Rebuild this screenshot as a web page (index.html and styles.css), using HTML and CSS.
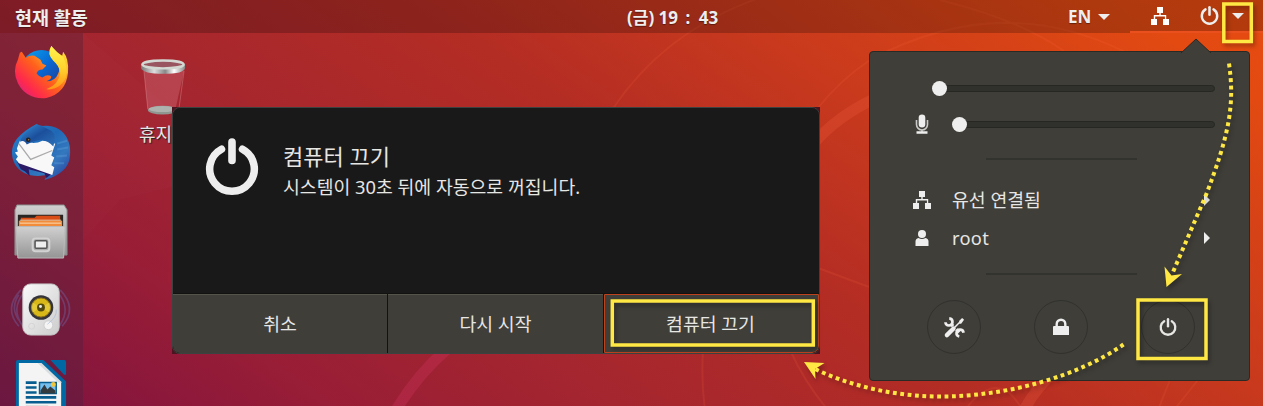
FILE: index.html
```html
<!DOCTYPE html>
<html lang="ko">
<head>
<meta charset="utf-8">
<title>컴퓨터 끄기</title>
<link rel="stylesheet" href="styles.css">
</head>
<body>
<svg width="0" height="0" class="defs">
  <defs>
    <symbol id="network" viewBox="0 0 20 20"><path d="M7 1h6v6h-2.300v2h5.500v4H19v6h-6v-6h1.900v-2.600H5.200V13H7v6H1v-6h2.800V9h5.500V7H7z"/></symbol>
    <symbol id="power" viewBox="0 0 18 18"><path d="M5.200 3.200a7.300 7.300 0 1 0 7.600 0" fill="none" stroke="currentColor" stroke-width="2.300" stroke-linecap="round"/><path d="M9 1.200v7" fill="none" stroke="currentColor" stroke-width="2.400" stroke-linecap="round"/></symbol>
    <linearGradient id="metal" x1="0" y1="0" x2="0" y2="1"><stop offset="0" stop-color="#d0d0d0"/><stop offset="1" stop-color="#959595"/></linearGradient>
    <linearGradient id="foxbody" x1="0" y1="1" x2="1" y2="0"><stop offset="0" stop-color="#c81f94"/><stop offset=".25" stop-color="#ff2a4c"/><stop offset=".5" stop-color="#ff611b"/><stop offset=".8" stop-color="#ffc42a"/><stop offset="1" stop-color="#fff044"/></linearGradient>
    <linearGradient id="foxtail" x1="0" y1="0" x2="0" y2="1"><stop offset="0" stop-color="#fff44f"/><stop offset=".5" stop-color="#ffd52e"/><stop offset="1" stop-color="#ff9518"/></linearGradient>
    <linearGradient id="globe" x1="0" y1="0" x2="1" y2="1"><stop offset="0" stop-color="#0aa6ef"/><stop offset=".5" stop-color="#0867d2"/><stop offset="1" stop-color="#293384"/></linearGradient>
    <linearGradient id="bird" x1="0" y1="0" x2="1" y2="1"><stop offset="0" stop-color="#2782cf"/><stop offset=".45" stop-color="#1f68b5"/><stop offset=".7" stop-color="#3478be"/><stop offset="1" stop-color="#27389b"/></linearGradient>
    <linearGradient id="head" x1="0" y1="0" x2="1" y2="1"><stop offset="0" stop-color="#3a93d8"/><stop offset=".5" stop-color="#1b4f9c"/><stop offset="1" stop-color="#2c70b8"/></linearGradient>
    <linearGradient id="rim" x1="0" y1="0" x2="1" y2="0"><stop offset="0" stop-color="#777"/><stop offset=".3" stop-color="#ddd"/><stop offset=".55" stop-color="#888"/><stop offset=".75" stop-color="#fff"/><stop offset="1" stop-color="#888"/></linearGradient>
    <linearGradient id="shell" x1="0" y1="0" x2="1" y2="1"><stop offset="0" stop-color="#fafafa"/><stop offset="1" stop-color="#ccc"/></linearGradient>
  </defs>
</svg>

<svg class="wallpaper" viewBox="0 0 1263 406" fill="none">
  <path d="M83 33L240 170L120 200L83 240z" fill="#fff" fill-opacity=".012"/>
  <path d="M446 350Q418 374 396 410" stroke="#d43465" stroke-opacity=".3" stroke-width="11"/>
  <path d="M612 110Q665 30 762 -3M818 108Q840 80 870 60Q1000 -10 1125 52M940 0Q1020 20 1064 51M703 350Q701 380 705 410M790 350Q805 383 828 410M818 268Q850 280 872 288" stroke="#ff6c42" stroke-opacity=".14" stroke-width="2"/>
  <path d="M815 142Q838 116 874 99M1050 376Q1035 390 1024 410" stroke="#ff6848" stroke-opacity=".2" stroke-width="11"/>
  <path d="M968 406Q998 370 1020 406M1170 380L1158 410M1198 380L1174 410" stroke="#ff6c42" stroke-opacity=".14" stroke-width="2"/>
</svg>

<header class="panel">
  <div class="activities">현재 활동</div>
  <div class="clock">(금) 19 <span class="colon">:</span> 43</div>
  <div class="input-source">EN<i class="caret"></i></div>
  <div class="status">
    <svg class="status-network"><use href="#network"/></svg>
    <svg class="status-power"><use href="#power"/></svg>
    <i class="caret"></i>
  </div>
</header>

<main class="workspace">
  <nav class="dock">
    <svg class="app" viewBox="0 0 60 60">
      <circle cx="31" cy="28" r="21" fill="url(#globe)"/>
      <path d="M11 9L15 15Q19 12 24 13L30 17L32 21L36 23L32 27Q27 27 26 31Q28 34 32 35Q37 31 41 34Q41 37 36 39Q45 39 48 31Q51 25 45 19Q37 10 41 3Q45 10 52 13L53 9Q59 16 58 30Q56 51 36 56Q16 58 7 41Q1 28 7 17L9 10z" fill="url(#foxbody)"/>
      <path d="M41 3Q47 10 53 14Q62 33 50 43Q44 48 36 47Q49 42 50 30Q49 23 43 18Q36 11 41 3z" fill="url(#foxtail)"/>
    </svg>
    <svg class="app" viewBox="0 0 60 60">
      <path d="M26 2Q27 4 33 4C51 2 62 17 60 34Q59 52 34 59L37 54Q13 58 4 43Q-3 29 6 17Q14 8 26 2z" fill="url(#bird)"/>
      <path d="M6 40L10 48L14 50L19 55L18 48L34 52L36 57L42 52L40 46z" fill="#2b1a66"/>
      <path d="M9 19L6 27L7 30L4 31L7 35L5 38L8 42L42 54L44 46L41 44L44 36L41 34L45 22Q38 19 32 19Q22 24 12 18z" fill="#f8f8f8"/>
      <path d="M8 22L20 38L42 29" fill="none" stroke="#aaa" stroke-width="1.300"/>
      <path d="M26 2Q22 6 16 10Q11 14 9 20Q14 18 16 23Q22 19 31 18Q38 19 43 25Q47 14 41 9Q34 5 26 2z" fill="url(#head)"/>
      <path d="M47 22L57 19M47 28L58 26M46 35L57 34M44 42L54 42" fill="none" stroke="#65a7df" stroke-opacity=".35" stroke-width="2"/>
      <circle cx="17.500" cy="18" r="2.300" fill="#222"/><circle cx="18" cy="18" r=".7" fill="#b58b50"/>
    </svg>
    <svg class="app" viewBox="0 0 60 60">
      <path d="M6 4H54L57 9V55H4V9z" fill="url(#metal)" stroke="#888"/>
      <path d="M7 14H53V26H7z" fill="#282625"/><path d="M10 17H24L26 15H50V20H10z" fill="#d94e16"/>
      <path d="M8 20H52V26H8z" fill="#f28c3d"/><path d="M9 19.500H51M9 22.500H51" stroke="#fff0cd" stroke-opacity=".8"/>
      <path d="M5 26H55L53.500 58H7z" fill="url(#metal)" stroke="#bbb"/>
      <rect x="22" y="38" width="17" height="13" rx="3" fill="#aaa" stroke="#d2d2d2" stroke-width="2"/>
      <rect x="24.500" y="40.500" width="12" height="7.500" rx="1" fill="#eee" stroke="#555" stroke-width="1.500"/>
    </svg>
    <svg class="app" viewBox="0 0 60 60">
      <path d="M10 10Q-8 29 8 47M14 12Q-1 29 12 47M50 10Q68 29 52 47M47 12Q62 29 49 47M8 15Q-1 28 8 41" fill="none" stroke="#6c75bd" stroke-opacity=".35" stroke-width="1.700"/>
      <rect x="12" y="4" width="37" height="52" rx="8" fill="url(#shell)" stroke="#c5c5c5"/>
      <circle cx="30.500" cy="28" r="12.500" fill="#34343a"/><circle cx="30.500" cy="28" r="9.700" fill="#d8b818" stroke="#8b7213"/>
      <path d="M30.500 28L22 23A10 10 0 0 0 22 33zM30.500 28L39 23A10 10 0 0 1 39 33z" fill="#fff180" opacity=".3"/>
      <circle cx="30.500" cy="28" r="4" fill="#504711"/><circle cx="30" cy="27" r="1.500" fill="#eee"/>
      <circle cx="38" cy="46" r="4.500" fill="#f4f4f4" stroke="#ccc"/><circle cx="21" cy="47" r="3" fill="none" stroke="#d4d4d4"/>
      <path d="M46 30Q47 38 37 45" stroke="#9eb4da" fill="none" stroke-opacity=".6"/>
    </svg>
    <svg class="app" viewBox="0 0 60 60">
      <path d="M7 1H33L56 23V60H5V3Q5 1 7 1z" fill="#0068a3"/>
      <path d="M8 4H29L51 24V60H8z" fill="#f4f4f4"/><path d="M31 4L52 24H48L27 4z" fill="#d9dddf"/>
      <path d="M40 1H54Q56 1 56 3V16H54z" fill="#0068a3"/>
      <path d="M15 24H26M15 29H26M15 34H26M15 39H46M15 44H46" stroke="#075d8f" stroke-width="2.600"/><path d="M15 48.500H38" stroke="#aaa" stroke-width="2"/>
      <path d="M29 24H46V35H29z" fill="#72bff0" stroke="#075d8f" stroke-width="1.500"/><circle cx="43" cy="26" r="2.500" fill="#f2c63b"/><path d="M30 35V32L34 26L37 31L40 28L45 32V35z" fill="#343b3e"/>
    </svg>
  </nav>
  <section class="desktop">
    <div class="trash">
      <svg class="trash-icon" viewBox="0 0 50 60">
        <path d="M5 13L9 53Q23 60 37 53L46 13z" fill="#c8606c" fill-opacity=".5"/>
        <path d="M5 13L9 52M46 13L41 50" stroke="#ebb7bb" stroke-opacity=".3" fill="none"/>
        <ellipse cx="24" cy="53" rx="15" ry="4.500" fill="#8f958f"/><ellipse cx="24" cy="52" rx="14" ry="3" fill="#aeb2ae"/>
        <path d="M2 6V10Q4 16 25 16T47 10V6z" fill="url(#rim)"/>
        <ellipse cx="24.500" cy="6.500" rx="21" ry="4" fill="#9a5660" stroke="#d3d8d3" stroke-width="2.500"/>
      </svg>
      <div class="trash-label">휴지통</div>
    </div>
  </section>
</main>

<div class="dialog-frame">
  <div class="dialog">
    <div class="dialog-body">
      <svg class="dialog-power" viewBox="0 0 54 58"><path d="M16.500 12.200A22.300 22.300 0 1 0 37.500 12.200" fill="none" stroke="#eee" stroke-width="7.500" stroke-linecap="round"/><path d="M27 5V23.500" stroke="#eee" stroke-width="7.600" stroke-linecap="round"/></svg>
      <div>
        <div class="dialog-title">컴퓨터 끄기</div>
        <div class="dialog-message">시스템이 30초 뒤에 자동으로 꺼집니다.</div>
      </div>
    </div>
    <div class="dialog-actions">
      <div class="action">취소</div>
      <div class="action">다시 시작</div>
      <div class="action focused">컴퓨터 끄기</div>
    </div>
  </div>
</div>

<aside class="menu">
  <svg class="menu-arrow" viewBox="0 0 30 15"><path d="M0 15L15 1L30 15" fill="#3f3e39" stroke="#292925"/></svg>
  <div class="slider-row"><span class="menu-icon"></span><div class="slider output"><i class="knob"></i></div></div>
  <div class="slider-row"><span class="menu-icon"><svg class="mic" viewBox="0 0 14 20"><rect x="3.700" y=".5" width="6.600" height="13" rx="3.300" fill="#eee"/><path d="M1.500 6v4.500a5.500 5.500 0 0 0 11 0V6M7 16v3" fill="none" stroke="#c9c9c7" stroke-width="1.600"/><path d="M1.500 18.500h11" stroke="#eee" stroke-width="2.500"/></svg></span><div class="slider input"><i class="knob"></i></div></div>
  <div class="rule"></div>
  <div class="menu-row"><span class="menu-icon"><svg class="net"><use href="#network"/></svg></span><span class="menu-label">유선 연결됨</span><i class="arrow"></i></div>
  <div class="menu-row"><span class="menu-icon"><svg class="user" viewBox="0 0 14 18"><circle cx="7" cy="5" r="4" fill="#eee"/><path d="M.5 17v-4.500q0-3 3-3.500q3.500 2 7 0q3 .5 3 3.500V17z" fill="#eee"/></svg></span><span class="menu-label root">root</span><i class="arrow"></i></div>
  <div class="rule"></div>
  <div class="buttons">
    <div class="round"><svg class="tools" viewBox="0 0 22 22"><path d="M3 19L10 12" stroke="#eee" stroke-width="4.500" stroke-linecap="round"/><path d="M10 12L18 4" stroke="#eee" stroke-width="1.600"/><path d="M16 4l3-3 2 2-3 4-2 0z" fill="#eee"/><path d="M7 7L9.500 9.500M13 13L16 16" stroke="#eee" stroke-width="3.500"/><path d="M5.500 1.500A3.700 3.700 0 1 1 1.500 5.500M20.500 16.500A3.700 3.700 0 1 0 16 20.500" fill="none" stroke="#eee" stroke-width="2.800"/></svg></div>
    <div class="round"><svg class="lock" viewBox="0 0 16 18"><path d="M3.700 9V6a4.300 4.300 0 0 1 8.600 0v3" fill="none" stroke="#eee" stroke-width="2.400"/><path d="M1 8h14q1 0 1 1v8H0V9q0-1 1-1z" fill="#eee"/></svg></div>
    <div class="round"><svg class="shutdown"><use href="#power"/></svg></div>
  </div>
</aside>

<svg class="annotations" viewBox="0 0 1263 406">
  <g fill="none" stroke="#ffe843" stroke-width="3.500">
    <rect x="1223.800" y="4" width="27.500" height="37.500"/>
    <rect x="1138" y="300" width="68" height="58.500"/>
    <rect x="612.300" y="301" width="201" height="44"/>
    <path d="M1229 63.500C1235 105 1229 135 1206 195L1173 272" stroke-width="4" stroke-dasharray="3.800 3.600"/>
    <path d="M1123.500 344.500C1080 375 1010 396.500 940 396.500C895 396.500 850 386 814 368.500" stroke-width="4" stroke-dasharray="3.800 3.600"/>
  </g>
  <path d="M1166.500 287L1164.500 266.500L1171.500 275.500L1182 274zM804 362L824.500 363L815 369L815.500 379z" fill="#ffe843"/>
</svg>
</body>
</html>
```
FILE: styles.css
```css
* { box-sizing: border-box; }
body {
  margin: 0;
  width: 1263px;
  height: 406px;
  overflow: hidden;
  position: relative;
  color: #e6e6e4;
  font: 18.3px/24px "Noto Sans", "Noto Sans CJK KR", sans-serif;
  background: linear-gradient(35.5deg, #80123f 0%, #87163d 6%, #981d36 18%, #a5262f 34%, #b42d24 54%, #c8391d 70%, #e24a12 92%, #e84c10 100%);
}
svg { display: block; flex: none; overflow: visible; }
.defs { position: absolute; }
.wallpaper, .annotations { position: absolute; inset: 0; width: 1263px; height: 406px; }
.panel {
  position: relative;
  height: 33px;
  display: grid;
  grid-template-columns: 612px 441px 62px 133px;
  align-items: center;
  padding-left: 15px;
  color: #eee;
  font-weight: 700;
  background: rgba(0, 0, 0, .22);
  text-shadow: 0 1px 1px rgba(0, 0, 0, .4);
}
.activities, .clock { padding-top: 2px; }
.activities { font-size: 18.5px; }
.clock { font-size: 17px; }
.colon { padding: 0 4px 0 3px; }
.input-source { font-size: 17px; display: flex; align-items: center; gap: 7px; }
.caret { border: 6px solid transparent; border-top-color: #eee; border-bottom: 0; }
.status { display: flex; height: 33px; align-items: center; padding-left: 20px; border-bottom: 2px solid #e9501e; }
.status-network { width: 20px; height: 20px; fill: #fff; }
.status-power { width: 19px; height: 19px; margin: 0 13px 0 30px; }
.workspace { position: relative; display: flex; height: 373px; }
.dock {
  width: 83px;
  display: flex;
  flex-direction: column;
  align-items: center;
  gap: 20px;
  padding: 10px 2px 0 0;
  background: rgba(60, 35, 65, .3);
}
.app { width: 59px; height: 59px; }
.desktop { padding: 25px 0 0 56px; }
.trash { width: 50px; }
.trash-icon { width: 49px; height: 59px; }
.trash-label { font-size: 18px; margin-top: 5px; white-space: nowrap; text-shadow: 1px 1px 1px #222; }
.dialog-frame { position: absolute; left: 172px; top: 107px; width: 648px; height: 247px; background: #4a1520; }
.dialog { height: 247px; display: flex; flex-direction: column; border: 1px solid #3b4240; border-radius: 8px; overflow: hidden; }
.dialog-body { flex: 1; display: flex; gap: 24px; padding: 29px 0 0 32px; background: #1a1919; }
.dialog-power { width: 54px; height: 58px; }
.dialog-title { font-size: 22px; line-height: 30px; margin-top: 4px; }
.dialog-message { line-height: 32px; }
.dialog-actions { display: grid; grid-template-columns: 214px 215px 1fr; gap: 1px; height: 60px; padding-top: 1px; background: #121211; }
.action { display: flex; align-items: center; justify-content: center; background: #3f3e39; border-top: 1px solid #55544a; }
.focused { border: 1px solid #bd431e; border-radius: 0 0 7px 0; padding-right: 2px; }
.menu {
  position: absolute;
  left: 869px;
  top: 51px;
  width: 381px;
  height: 330px;
  padding: 18px 34px 0 42px;
  border: 1px solid #292925;
  border-radius: 4px;
  background: #3f3e39;
}
.menu-arrow { position: absolute; left: 311px; top: -14px; width: 30px; height: 15px; }
.slider-row { height: 36px; display: flex; align-items: center; }
.menu-icon { width: 20px; display: flex; justify-content: center; flex: none; }
.mic { width: 14px; height: 20px; }
.slider { flex: 1; height: 7px; display: flex; align-items: center; border: 1px solid #262722; border-radius: 4px; background: #30312c; }
.output { margin-left: 1px; }
.input { margin-left: 21px; }
.knob { width: 15px; height: 15px; border-radius: 50%; background: #eee; margin-left: -2px; }
.rule { width: 151px; height: 2px; margin: 16px 0 0 74px; background: #32322e; }
.menu-row { height: 38px; display: flex; align-items: center; padding-right: 5px; }
.rule + .menu-row { margin-top: 21px; }
.menu-label { margin-left: 20px; flex: 1; }
.root { letter-spacing: .3px; }
.arrow { border: 6px solid transparent; border-left-color: #eee; border-right: 0; }
.net { width: 20px; height: 20px; fill: #eee; }
.user { width: 14px; height: 18px; }
.rule + .buttons { margin-top: 25px; }
.buttons { display: flex; gap: 53px; padding-left: 15px; }
.round { width: 54px; height: 54px; flex: none; border: 1px solid #31312d; border-radius: 50%; display: flex; align-items: center; justify-content: center; }
.tools { width: 21px; height: 21px; }
.lock { width: 16px; height: 18px; }
.shutdown { width: 18px; height: 18px; }
.annotations { filter: drop-shadow(2px 3px 2px rgba(0, 0, 0, .3)); pointer-events: none; }
```
